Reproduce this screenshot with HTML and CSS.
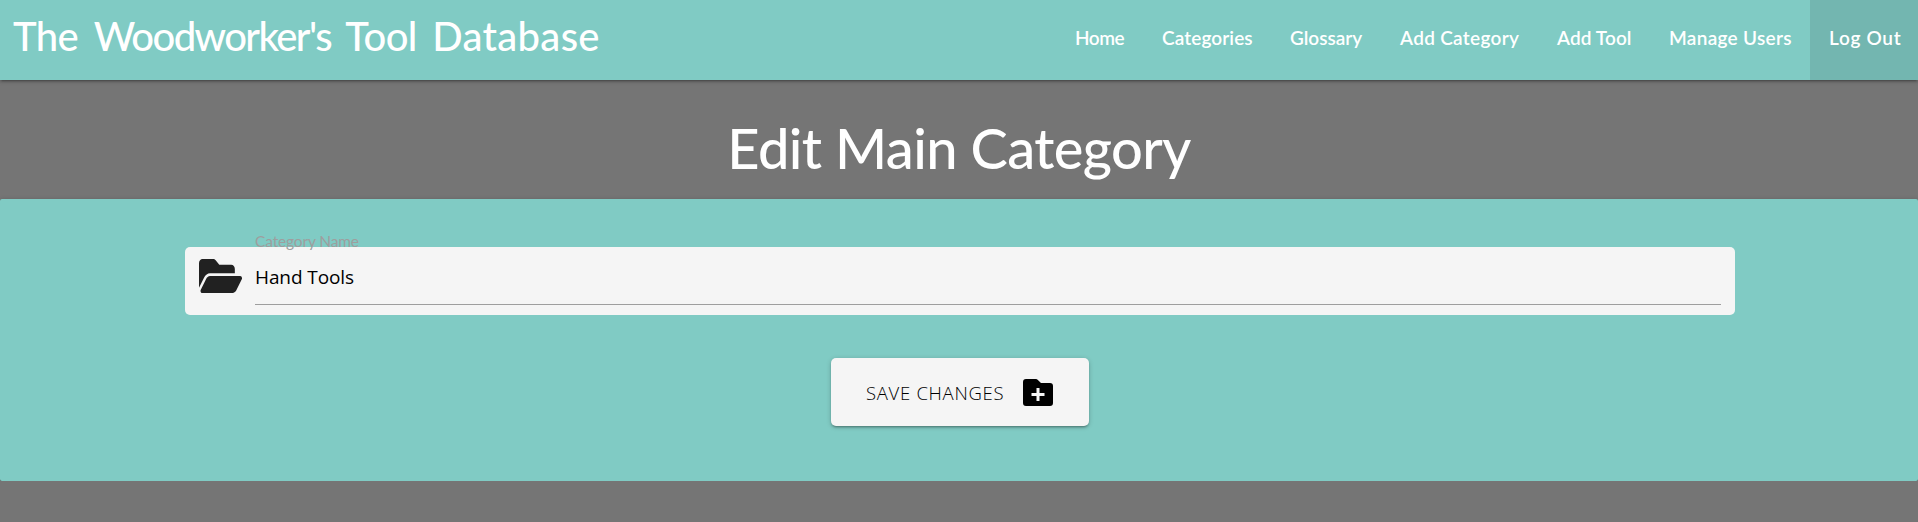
FILE: index.html
```html
<!DOCTYPE html>
<html lang="en">
<head>
<meta charset="utf-8">
<title>The Woodworker's Tool Database</title>
<link rel="stylesheet" href="styles.css">
</head>
<body>
<nav class="navbar">
  <a class="brand">The <span class="brand-tight">Woodworker's</span> Tool <span class="brand-wide">Database</span></a>
  <ul class="nav-links">
    <li class="nav-home">Home</li>
    <li class="nav-categories">Categories</li>
    <li class="nav-glossary">Glossary</li>
    <li class="nav-add-category">Add Category</li>
    <li class="nav-add-tool">Add Tool</li>
    <li class="nav-users">Manage Users</li>
    <li class="nav-logout">Log Out</li>
  </ul>
</nav>
<h2 class="title">Edit Main Category</h2>
<form class="panel">
  <div class="field">
    <svg class="folder-icon" viewBox="0 64 576 384" preserveAspectRatio="none"><path fill="#212121" d="M573 293l-73 124c-8 14-28 31-52 31H44c-18 0-30-20-20-36l73-124c8-14 27-32 51-32h404c19 0 30 20 21 37zM148 224h332v-48c0-27-21-48-48-48H272l-49-49c-10-10-20-15-34-15H48C21 64 0 85 0 112v278l69-118c17-29 47-48 79-48z"/></svg>
    <div class="control">
      <label class="label" for="category">Category Name</label>
      <input class="input" id="category" type="text" value="Hand Tools">
    </div>
  </div>
  <button class="save" type="button">
    <span class="save-text">SAVE CHANGES</span>
    <svg class="plus-icon" viewBox="0 0 30 27"><path d="M3 0h10q1 0 1.6.7L18 4h9q3 0 3 3v17q0 3-3 3H3q-3 0-3-3V3q0-3 3-3z"/><path d="M15 9v13M8.5 15.5h13" fill="none" stroke="#f5f5f5" stroke-width="3"/></svg>
  </button>
</form>
</body>
</html>
```
FILE: styles.css
```css
* { box-sizing: border-box; }
body { margin: 0; background: #757575; font-family: Lato, sans-serif; overflow: hidden; }
.navbar {
  display: flex; justify-content: space-between; height: 80px;
  background: #80cbc4; color: #fff;
  box-shadow: 0 2px 2px rgba(0,0,0,.14), 0 3px 1px -2px rgba(0,0,0,.12), 0 1px 5px rgba(0,0,0,.2);
}
.brand { padding-left: 13px; font-size: 40px; font-weight: 500; line-height: 73px; letter-spacing: -.6px; word-spacing: 6px; white-space: nowrap; }
.brand-tight { letter-spacing: -1.6px; }
.brand-wide { letter-spacing: .3px; }
.nav-links { display: flex; margin: 0; padding: 0; list-style: none; font-size: 19px; line-height: 76px; font-weight: 600; white-space: nowrap; }
.nav-links li { padding-left: 19px; }
.nav-home { width: 87px; letter-spacing: -.5px; }
.nav-categories { width: 128px; letter-spacing: .1px; }
.nav-glossary { width: 110px; }
.nav-add-category { width: 157px; letter-spacing: .3px; }
.nav-add-tool { width: 112px; letter-spacing: .1px; }
.nav-users { width: 160px; letter-spacing: .3px; }
.nav-logout { width: 108px; background: #73b6b0; letter-spacing: .7px; }
.title { height: 119px; margin: 0; padding-top: 34px; font-size: 56px; line-height: 67px; font-weight: 500; color: #fff; text-align: center; letter-spacing: -.6px; }
.panel {
  display: flex; flex-direction: column; align-items: center; gap: 43px;
  height: 282px; padding: 48px 0 0 2px; background: #80cbc4; border-radius: 2px;
  box-shadow: 0 2px 2px rgba(0,0,0,.14), 0 3px 1px -2px rgba(0,0,0,.12), 0 1px 5px rgba(0,0,0,.2);
}
.field { display: flex; gap: 13px; width: 1550px; height: 68px; padding: 0 14px; background: #f5f5f5; border-radius: 5px; }
.folder-icon { width: 43px; height: 34px; margin-top: 12px; }
.control { position: relative; flex: 1; }
.label { position: absolute; left: 0; top: -17px; font-size: 15.5px; line-height: 22px; color: #9e9e9e; letter-spacing: -.15px; }
.input {
  display: block; width: 100%; height: 58px; padding: 3px 0 0; border: 0; border-bottom: 1px solid #9e9e9e;
  background: transparent; outline: 0; color: #000; font: 400 19px "Open Sans", sans-serif; letter-spacing: -.1px;
}
.save {
  display: flex; align-items: center; gap: 19px; width: 258px; height: 68px; padding: 0 0 0 35px;
  border: 0; border-radius: 5px; background: #f5f5f5; color: #000; font: 350 18.5px "Open Sans", sans-serif; letter-spacing: .7px;
  box-shadow: 0 2px 2px rgba(0,0,0,.14), 0 3px 1px -2px rgba(0,0,0,.12), 0 1px 5px rgba(0,0,0,.2);
}
.save-text { width: 138px; white-space: nowrap; text-align: left; }
.plus-icon { width: 30px; height: 27px; }
```
